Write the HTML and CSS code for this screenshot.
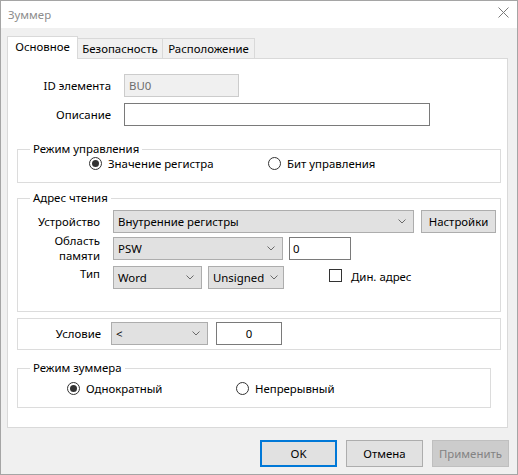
FILE: index.html
```html
<!DOCTYPE html>
<html lang="ru">
<head>
    <meta charset="UTF-8">
    <title>Зуммер</title>
    <link rel="stylesheet" href="styles.css">
</head>
<body>
    <div class="window">
        <div class="titlebar">
            <span class="title">Зуммер</span>
            <span class="close">
                <svg width="11" height="11" viewBox="0 0 11 11"><path d="M0.5 0.5 L10.5 10.5 M10.5 0.5 L0.5 10.5" stroke="#7a7a7a" stroke-width="1" fill="none"/></svg>
            </span>
        </div>
        <div class="content">
            <div class="tabs">
                <div class="tab active">Основное</div>
                <div class="tab tab-sec">Безопасность</div>
                <div class="tab tab-pos">Расположение</div>
            </div>
            <div class="panel">
                <div class="row row-id">
                    <span class="lbl lbl-top">ID элемента</span>
                    <div class="field field-id">BU0</div>
                </div>
                <div class="row row-desc">
                    <span class="lbl lbl-top">Описание</span>
                    <div class="field field-desc"></div>
                </div>

                <!-- Режим управления -->
                <div class="group g-mode">
                    <div class="group-title">Режим управления</div>
                    <div class="radios radios-mode">
                        <span class="opt opt-first"><span class="radio checked"></span><span class="radio-text">Значение регистра</span></span>
                        <span class="opt"><span class="radio"></span><span class="radio-text">Бит управления</span></span>
                    </div>
                </div>

                <!-- Адрес чтения -->
                <div class="group g-addr">
                    <div class="group-title">Адрес чтения</div>
                    <div class="row row-dev">
                        <span class="lbl lbl-addr">Устройство</span>
                        <div class="select sel-dev"><span>Внутренние регистры</span><svg width="8" height="5" viewBox="0 0 8 5"><path d="M0.5 0.5 L4 4 L7.5 0.5" fill="none" stroke="#6a6a6a"/></svg></div>
                        <button class="btn btn-setup">Настройки</button>
                    </div>
                    <div class="row row-mem">
                        <span class="lbl lbl-addr lbl-two">Область<br>памяти</span>
                        <div class="select sel-mem"><span>PSW</span><svg width="8" height="5" viewBox="0 0 8 5"><path d="M0.5 0.5 L4 4 L7.5 0.5" fill="none" stroke="#6a6a6a"/></svg></div>
                        <div class="field field-off">0</div>
                    </div>
                    <div class="row row-type">
                        <span class="lbl lbl-addr">Тип</span>
                        <div class="select sel-word"><span>Word</span><svg width="8" height="5" viewBox="0 0 8 5"><path d="M0.5 0.5 L4 4 L7.5 0.5" fill="none" stroke="#6a6a6a"/></svg></div>
                        <div class="select sel-sign"><span>Unsigned</span><svg width="8" height="5" viewBox="0 0 8 5"><path d="M0.5 0.5 L4 4 L7.5 0.5" fill="none" stroke="#6a6a6a"/></svg></div>
                        <span class="check-wrap"><span class="checkbox"></span><span class="check-text">Дин. адрес</span></span>
                    </div>
                </div>

                <!-- Условие -->
                <div class="group g-cond">
                    <div class="row row-cond">
                        <span class="lbl lbl-cond">Условие</span>
                        <div class="select sel-cond"><span>&lt;</span><svg width="8" height="5" viewBox="0 0 8 5"><path d="M0.5 0.5 L4 4 L7.5 0.5" fill="none" stroke="#6a6a6a"/></svg></div>
                        <div class="field field-cond">0</div>
                    </div>
                </div>

                <!-- Режим зуммера -->
                <div class="group g-buzz">
                    <div class="group-title">Режим зуммера</div>
                    <div class="radios radios-buzz">
                        <span class="opt opt-first"><span class="radio checked"></span><span class="radio-text">Однократный</span></span>
                        <span class="opt"><span class="radio"></span><span class="radio-text">Непрерывный</span></span>
                    </div>
                </div>
            </div>
            <div class="footer">
                <button class="btn btn-ok">OK</button>
                <button class="btn btn-cancel">Отмена</button>
                <button class="btn btn-apply" disabled>Применить</button>
            </div>
        </div>
    </div>
</body>
</html>
```

FILE: styles.css
```css
body {
    margin: 0;
    font-family: "Noto Sans", "Open Sans", sans-serif;
    font-size: 11.4px;
    color: #000;
    background: #fff;
}
.window {
    width: 518px;
    height: 475px;
    box-sizing: border-box;
    border: 1px solid #a5a5a5;
    background: #f0f0f0;
    display: flex;
    flex-direction: column;
}
.titlebar {
    height: 27px;
    background: #fff;
    display: flex;
    align-items: center;
    justify-content: space-between;
    padding: 0 8px 0 7px;
}
.title {
    color: #8c8c8c;
}
.close {
    display: flex;
    margin-top: -4px;
}
.content {
    padding: 8px 9px 0 6px;
}

/* tabs */
.tabs {
    display: flex;
    align-items: flex-end;
    height: 22px;
}
.tab {
    box-sizing: border-box;
    height: 20px;
    line-height: 20px;
    text-align: center;
    border: 1px solid #d9d9d9;
    border-left: none;
    border-bottom: none;
    background: #f0f0f0;
}
.tab.active {
    width: 71px;
    height: 23px;
    line-height: 20px;
    border-left: 1px solid #d9d9d9;
    background: #fff;
    margin-bottom: -1px;
    position: relative;
    z-index: 1;
}
.tab-sec { width: 85px; }
.tab-pos { width: 92px; }

.panel {
    box-sizing: border-box;
    height: 370px;
    border: 1px solid #d9d9d9;
    background: #fff;
}

/* rows and fields */
.row {
    display: flex;
    align-items: center;
}
.lbl {
    text-align: right;
    flex: none;
}
.lbl-top {
    width: 103px;
    margin-right: 13px;
}
.row-id { margin-top: 15px; }
.row-desc { margin-top: 6px; }
.field {
    box-sizing: border-box;
    height: 23px;
    line-height: 21px;
    border: 1px solid #7a7a7a;
    background: #fff;
    padding: 0 4px;
}
.field-id {
    width: 115px;
    background: #f0f0f0;
    border-color: #cccccc;
    color: #6d6d6d;
}
.field-desc { width: 306px; }

/* groups */
.group {
    border: 1px solid #dcdcdc;
    margin: 0 6px 0 9px;
}
.group-title {
    width: fit-content;
    margin: -9px 0 0 12px;
    padding: 0 3px;
    line-height: 16px;
    background: #fff;
}
.g-mode {
    margin-top: 23px;
    padding-bottom: 11px;
}
.radios {
    display: flex;
    align-items: center;
    height: 16px;
    margin-top: -2px;
}
.opt {
    display: flex;
    align-items: center;
}
.radio {
    box-sizing: border-box;
    width: 13px;
    height: 13px;
    border: 1px solid #333;
    border-radius: 50%;
    flex: none;
    display: flex;
    align-items: center;
    justify-content: center;
    background: #fff;
}
.radio.checked::after {
    content: "";
    width: 7px;
    height: 7px;
    border-radius: 50%;
    background: #333;
}
.radio-text {
    margin-left: 6px;
}
.radios-mode { padding-left: 71px; }
.radios-mode .opt-first { width: 179px; }

.g-addr {
    margin-top: 15px;
    padding-bottom: 22px;
}
.row-dev { margin-top: 4px; }
.lbl-addr {
    width: 82px;
    margin-right: 13px;
}
.lbl-two {
    line-height: 15px;
}
.select {
    box-sizing: border-box;
    height: 23px;
    border: 1px solid #adadad;
    background: #e1e1e1;
    display: flex;
    align-items: center;
    justify-content: space-between;
    padding: 0 7px 0 4px;
}
.sel-dev { width: 301px; }
.sel-mem { width: 170px; }
.sel-word { width: 89px; }
.sel-sign { width: 76px; margin-left: 6px; padding-right: 5px; }
.field-off { width: 62px; margin-left: 6px; padding-left: 3px; }
.row-type { margin-top: 3px; align-items: flex-start; }
.check-wrap {
    display: flex;
    align-items: center;
    margin: 3px 0 0 45px;
    height: 13px;
}
.checkbox {
    box-sizing: border-box;
    width: 13px;
    height: 13px;
    border: 1px solid #333;
    background: #fff;
}
.check-text {
    margin-left: 9px;
    margin-top: 2px;
}

.g-cond {
    margin-top: 6px;
    padding: 3px 0 4px;
}
.lbl-cond {
    width: 83px;
    margin-right: 10px;
}
.sel-cond { width: 97px; }
.field-cond {
    width: 66px;
    margin-left: 8px;
    text-align: center;
}

.g-buzz {
    margin: 18px 16px 0 9px;
    padding-bottom: 11px;
}
.radios-buzz {
    margin-top: 4px;
    padding-left: 49px;
}
.radios-buzz .opt-first { width: 169px; }

/* buttons */
.btn {
    box-sizing: border-box;
    font-family: inherit;
    font-size: 11.4px;
    color: #000;
    background: #e1e1e1;
    border: 1px solid #adadad;
    padding: 0;
    margin: 0;
}
.btn-setup {
    width: 75px;
    height: 23px;
    margin-left: 7px;
}
.footer {
    display: flex;
    justify-content: flex-end;
    gap: 9px;
    margin: 12px -1px 0 0;
}
.footer .btn {
    width: 77px;
    height: 27px;
}
.btn-ok {
    border: 2px solid #0078d7;
}
.btn-apply {
    background: #cccccc;
    border-color: #bfbfbf;
    color: #838383;
}
```
